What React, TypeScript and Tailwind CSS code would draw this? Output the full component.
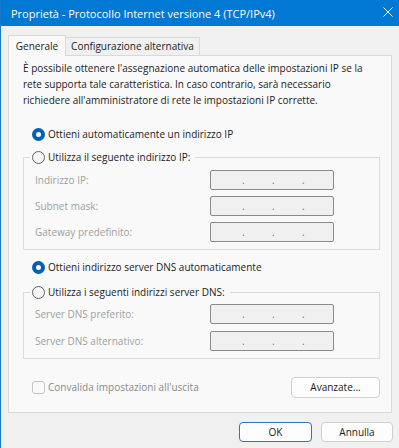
import React from "react";

function Radio({ checked }: { checked?: boolean }) {
  if (checked) {
    return (
      <span className="flex h-[13px] w-[13px] shrink-0 items-center justify-center rounded-full bg-[#005fb8]">
        <span className="h-[5px] w-[5px] rounded-full bg-white" />
      </span>
    );
  }
  return <span className="h-[13px] w-[13px] shrink-0 rounded-full border border-[#616161] bg-[#f6f6f6]" />;
}

function IpBox() {
  return (
    <div className="flex h-[20px] w-[124px] items-center gap-[28px] rounded-[2px] border border-[#8a8a8a] bg-[#f0f0f0] pl-[31px] text-[10px] leading-none text-[#6e6e6e]">
      <span className="w-[2px]">.</span>
      <span className="w-[2px]">.</span>
      <span className="w-[2px]">.</span>
    </div>
  );
}

function FieldRow({ label }: { label: string }) {
  return (
    <div className="flex items-center">
      <span className="w-[175px] text-[#a0a0a0]">{label}</span>
      <IpBox />
    </div>
  );
}

function Button({ children, primary }: { children: React.ReactNode; primary?: boolean }) {
  return (
    <button
      className={
        primary
          ? "flex h-[20px] w-[73px] items-center justify-center rounded-[4px] border border-[#2f72bd] bg-[#fdfdfd] text-[10px] text-[#1b1b1b]"
          : "flex h-[20px] w-[72px] items-center justify-center rounded-[4px] border border-[#d0d0d0] bg-[#fdfdfd] text-[10px] text-[#1b1b1b]"
      }
    >
      {children}
    </button>
  );
}

export default function App() {
  return (
    <div className="flex h-[448px] w-[399px] flex-col border-l border-[#1a78d0] bg-[#f0f0f0] font-['Open_Sans',sans-serif] text-[10px] text-[#1b1b1b]">
      {/* Title bar */}
      <div className="flex h-[26px] shrink-0 items-center justify-between bg-[#0078d4] pl-[10px] pr-[6px] text-white">
        <span className="text-[11px] leading-none">Proprietà - Protocollo Internet versione 4 (TCP/IPv4)</span>
        <svg width="10" height="10" viewBox="0 0 10 10" className="mb-[3px]">
          <path d="M0.5 0.5 L9.5 9.5 M9.5 0.5 L0.5 9.5" stroke="white" strokeWidth="1" fill="none" />
        </svg>
      </div>

      <div className="px-[7px] pt-[9px]">
        {/* Tabs */}
        <div className="flex h-[20px] items-end">
          <div className="relative z-10 -mb-px flex h-[21px] w-[58px] items-center justify-center border border-b-0 border-[#d9d9d9] bg-[#f9f9f9]">
            Generale
          </div>
          <div className="flex h-[18px] w-[134px] items-center justify-center border border-b-0 border-l-0 border-[#d9d9d9] bg-[#f0f0f0]">
            Configurazione alternativa
          </div>
        </div>

        {/* Panel */}
        <div className="flex h-[358px] w-[384px] flex-col border border-[#d9d9d9] bg-[#f9f9f9] pl-[14px] pt-[4px]">
          <p className="whitespace-nowrap leading-[16px]">
            È possibile ottenere l'assegnazione automatica delle impostazioni IP se la
            <br />
            rete supporta tale caratteristica. In caso contrario, sarà necessario
            <br />
            richiedere all'amministratore di rete le impostazioni IP corrette.
          </p>

          <div className="mt-[18px] flex h-[16px] items-center gap-[3px] pl-[9px]">
            <Radio checked />
            <span>Ottieni automaticamente un indirizzo IP</span>
          </div>

          <fieldset className="mt-[7px] w-[357px] border border-[#dcdcdc] pb-[7px] pl-[11px]">
            <legend className="-ml-[5px] flex h-[16px] items-center gap-[3px] pl-[2px] pr-[5px]">
              <Radio />
              <span>Utilizza il seguente indirizzo IP:</span>
            </legend>
            <div className="flex flex-col gap-[6px] pt-[5px]">
              <FieldRow label="Indirizzo IP:" />
              <FieldRow label="Subnet mask:" />
              <FieldRow label="Gateway predefinito:" />
            </div>
          </fieldset>

          <div className="mt-[9px] flex h-[16px] items-center gap-[3px] pl-[9px]">
            <Radio checked />
            <span>Ottieni indirizzo server DNS automaticamente</span>
          </div>

          <fieldset className="mt-[9px] w-[357px] border border-[#dcdcdc] pb-[7px] pl-[11px]">
            <legend className="-ml-[5px] flex h-[16px] items-center gap-[3px] pl-[2px] pr-[5px]">
              <Radio />
              <span>Utilizza i seguenti indirizzi server DNS:</span>
            </legend>
            <div className="flex flex-col gap-[7px] pt-[4px]">
              <FieldRow label="Server DNS preferito:" />
              <FieldRow label="Server DNS alternativo:" />
            </div>
          </fieldset>

          <div className="mt-[18px] flex w-[357px] items-center justify-between">
            <div className="flex items-center gap-[3px] pl-[9px] text-[#8a8a8a]">
              <span className="h-[13px] w-[13px] rounded-[3px] border border-[#c4c4c4]" />
              <span>Convalida impostazioni all'uscita</span>
            </div>
            <button className="flex h-[21px] w-[89px] items-center justify-center rounded-[4px] border border-[#d0d0d0] bg-[#fdfdfd] text-[#1b1b1b]">
              Avanzate...
            </button>
          </div>
        </div>

        {/* Dialog buttons */}
        <div className="-mr-px mt-[9px] flex justify-end gap-[9px]">
          <Button primary>OK</Button>
          <Button>Annulla</Button>
        </div>
      </div>
    </div>
  );
}
